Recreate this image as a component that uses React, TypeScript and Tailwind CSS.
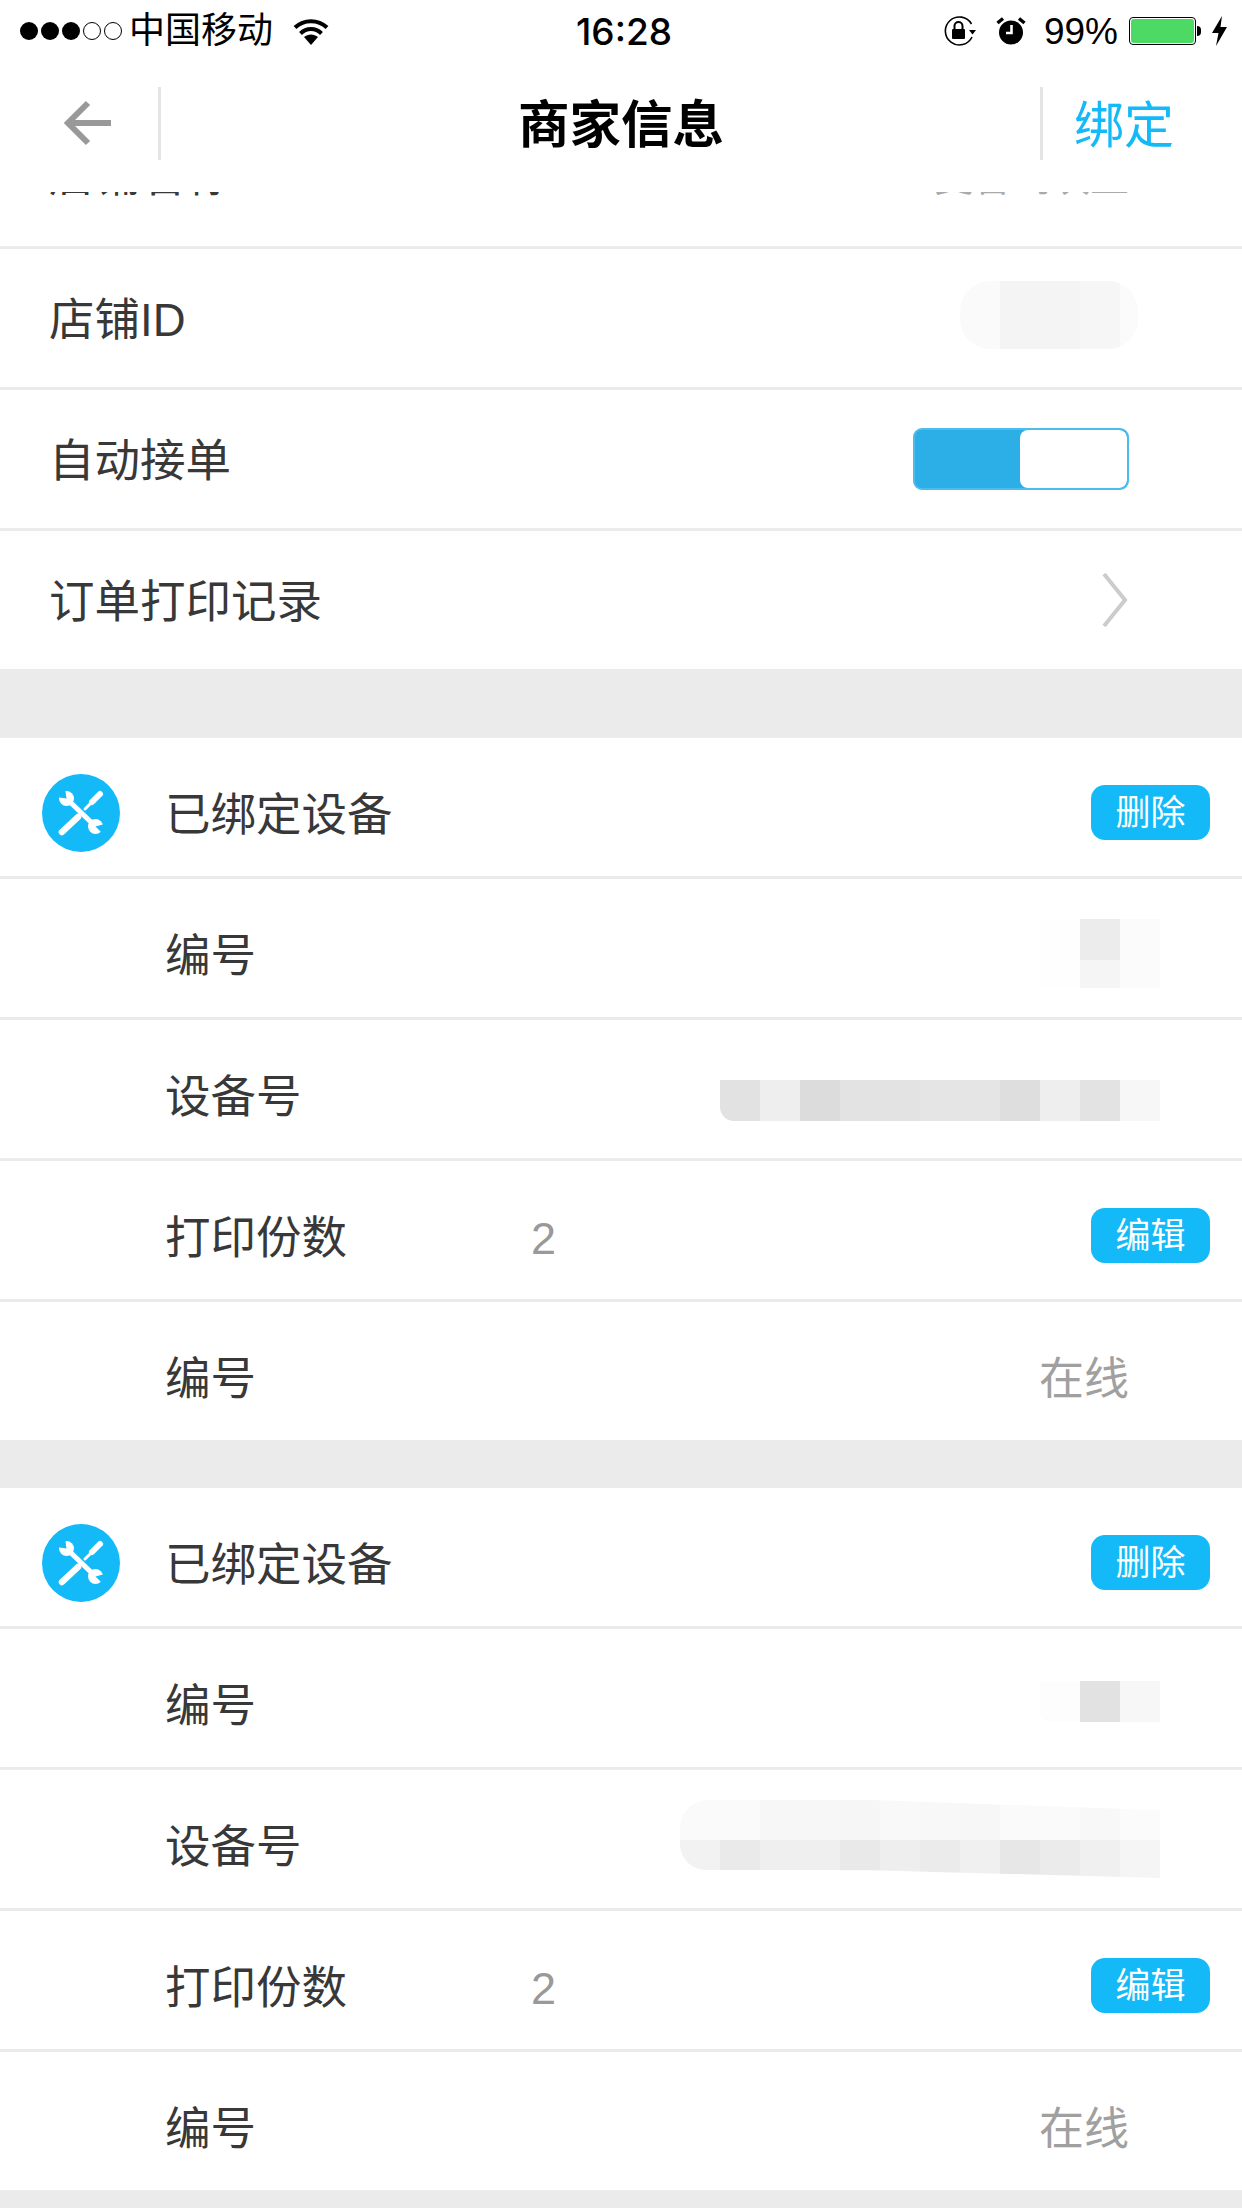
const FONT = "font-['Liberation_Sans','Noto_Sans_CJK_SC',sans-serif]"

// 打码区域的色块，一行一组
const CODE_A = ['bg-[#fefefe]', 'bg-[#ececec]', 'bg-[#fbfbfb]']
const CODE_A2 = ['bg-[#fefefe]', 'bg-[#f5f5f5]', 'bg-[#fbfbfb]']
const DEVICE_A = [
  'bg-[#e2e2e2]',
  'bg-[#eeeeee]',
  'bg-[#dcdcdc]',
  'bg-[#e3e3e3]',
  'bg-[#e3e3e3]',
  'bg-[#e5e5e5]',
  'bg-[#e5e5e5]',
  'bg-[#dedede]',
  'bg-[#eeeeee]',
  'bg-[#e3e3e3]',
  'bg-[#f7f7f7]',
]
const CODE_B = ['bg-[#fdfdfd]', 'bg-[#e2e2e2]', 'bg-[#f7f7f7]']
const DEVICE_B_TOP = [
  'bg-[#fafafa] rounded-tl-[28px]',
  'bg-[#fafafa]',
  'bg-[#f7f7f7]',
  'bg-[#f7f7f7]',
  'bg-[#f6f6f6]',
  'bg-[#f9f9f9]',
  'bg-[#f8f8f8]',
  'bg-[#f7f7f7]',
  'bg-[#fafafa]',
  'bg-[#fafafa]',
  'bg-[#f8f8f8]',
  'bg-[#fbfbfb]',
]
const DEVICE_B_BOTTOM = [
  'bg-[#f2f2f2] mb-[8px] rounded-bl-[26px]',
  'bg-[#eaeaea] mb-[8px]',
  'bg-[#efefef] mb-[8px]',
  'bg-[#efefef] mb-[8px]',
  'bg-[#e9e9e9]',
  'bg-[#eeeeee]',
  'bg-[#ebebeb]',
  'bg-[#f0f0f0]',
  'bg-[#e7e7e7]',
  'bg-[#ebebeb]',
  'bg-[#f0f0f0]',
  'bg-[#f5f5f5]',
]

function Cells({ colors, height }: { colors: string[]; height: string }) {
  return (
    <div className={`flex ${height}`}>
      {colors.map((c, i) => (
        <div key={i} className={`w-[40px] ${c}`} />
      ))}
    </div>
  )
}

function Row({
  label,
  indent = false,
  last = false,
  labelOffset = 'pt-[5px]',
  children,
}: {
  label: string
  indent?: boolean
  last?: boolean
  labelOffset?: string
  children?: React.ReactNode
}) {
  return (
    <div
      className={`flex items-center justify-between ${indent ? 'pl-[165px]' : 'pl-[49px]'} ${
        last ? 'h-[138px]' : 'h-[141px] border-b-[3px] border-[#ebebeb]'
      }`}
    >
      <span className={`text-[45.5px] leading-none text-[#383838] ${indent ? 'pt-[17px]' : labelOffset}`}>
        {label}
      </span>
      {children}
    </div>
  )
}

function BlueButton({ text }: { text: string }) {
  return (
    <div className="mr-[32px] mt-[10px] flex h-[55px] w-[119px] items-center justify-center rounded-[14px] bg-[#14baf8] text-[35px] leading-none text-white">
      {text}
    </div>
  )
}

function ToolIcon() {
  return (
    <svg viewBox="0 0 78 78" className="h-[78px] w-[78px]">
      <circle cx="39" cy="39" r="39" fill="#14baf8" />
      <g fill="none" stroke="#fff" strokeLinecap="round">
        <path d="M20 58 L36 43" strokeWidth="6.5" />
        <path d="M43 35 L51 27" strokeWidth="3" />
        <path d="M50 28 L58 20" strokeWidth="6" />
        <path d="M25 25 L53 52" strokeWidth="5" />
      </g>
      <circle cx="24.5" cy="24.5" r="7.5" fill="#fff" />
      <path d="M24.5 24.5 L14 23 L23 14 Z" fill="#14baf8" />
      <circle cx="53.5" cy="52.5" r="7.5" fill="#fff" />
      <path d="M53.5 52.5 L66 49 L63 62 Z" fill="#14baf8" />
    </svg>
  )
}

function DeviceGroup({ code, device, last }: { code: React.ReactNode; device: React.ReactNode; last?: boolean }) {
  return (
    <div>
      <div className="relative">
        <div className="absolute left-[42px] top-[36px]">
          <ToolIcon />
        </div>
        <Row label="已绑定设备" indent>
          <BlueButton text="删除" />
        </Row>
      </div>
      <Row label="编号" indent>
        {code}
      </Row>
      <Row label="设备号" indent>
        {device}
      </Row>
      <Row label="打印份数" indent>
        <span className="ml-[-96px] flex-1 pl-[280px] pt-[17px] text-[45px] leading-none text-[#999999]">2</span>
        <BlueButton text="编辑" />
      </Row>
      <Row label="编号" indent last>
        <span className="mr-[113px] pt-[17px] text-[45px] leading-none text-[#a0a0a0]">在线</span>
      </Row>
      {!last && <div className="h-[48px] bg-[#ebebeb]" />}
    </div>
  )
}

function StatusBar() {
  return (
    <div className="flex h-[62px] items-center text-black">
      <div className="flex flex-1 items-center pl-[20px]">
        <div className="flex gap-[3px]">
          <span className="h-[18px] w-[18px] rounded-full bg-black" />
          <span className="h-[18px] w-[18px] rounded-full bg-black" />
          <span className="h-[18px] w-[18px] rounded-full bg-black" />
          <span className="h-[18px] w-[18px] rounded-full border border-black" />
          <span className="h-[18px] w-[18px] rounded-full border border-black" />
        </div>
        <span className="ml-[7px] text-[36px] leading-none">中国移动</span>
        <svg viewBox="0 0 36 27" className="ml-[20px] h-[27px] w-[36px]">
          <path d="M18 27 L11 19 C15 15.5 21 15.5 25 19 Z" />
          <path d="M2 9.5 C11 1 25 1 34 9.5" fill="none" stroke="#000" strokeWidth="4" />
          <path d="M7.5 15.5 C13.5 9.5 22.5 9.5 28.5 15.5" fill="none" stroke="#000" strokeWidth="4" />
        </svg>
      </div>
      <span className="font-['Inter',sans-serif] text-[37px] font-medium leading-none">16:28</span>
      <div className="flex flex-1 items-center justify-end pr-[14px]">
        <svg viewBox="0 0 33 30" className="h-[30px] w-[33px]">
          <path d="M29 21 A14 14 0 1 1 28.5 8" fill="none" stroke="#000" strokeWidth="1.6" />
          <path d="M33 14 L26 14 L29.5 18.5 Z" />
          <rect x="9" y="13" width="13" height="10" rx="1" />
          <path d="M11.5 13 V10 A4 4 0 0 1 19.5 10 V13" fill="none" stroke="#000" strokeWidth="2" />
        </svg>
        <svg viewBox="0 0 30 28" className="ml-[20px] h-[28px] w-[30px]">
          <circle cx="15" cy="15.5" r="12" />
          <path d="M1.5 6 L7 1.5 M28.5 6 L23 1.5" stroke="#000" strokeWidth="3.5" />
          <path d="M15.5 8 V16 H10" fill="none" stroke="#fff" strokeWidth="2.6" />
        </svg>
        <span className="ml-[18px] text-[37px] font-light leading-none">99%</span>
        <div className="ml-[11px] h-[28px] w-[67px] rounded-[4px] border border-black p-[1px]">
          <div className="h-full w-full rounded-[3px] bg-[#4cd964]" />
        </div>
        <div className="ml-[1px] h-[10px] w-[4px] rounded-r-full bg-black" />
        <svg viewBox="0 0 17 30" className="ml-[10px] h-[30px] w-[17px]">
          <path d="M11 0 L1 17 H7.5 L5 30 L16 11 H9.5 Z" />
        </svg>
      </div>
    </div>
  )
}

function NavBar() {
  return (
    <div className="flex h-[122px] items-center">
      <div className="flex h-full w-[158px] items-center pl-[63px]">
        <svg viewBox="0 0 48 46" className="h-[46px] w-[48px]">
          <path d="M48 23 H5 M25 3 L5 23 L25 43" fill="none" stroke="#999999" strokeWidth="6" />
        </svg>
      </div>
      <div className="h-[73px] w-[3px] bg-[#e5e5e5]" />
      <div className="flex-1 pl-[41px] pt-[5px] text-center text-[51.5px] font-bold leading-none text-black">
        商家信息
      </div>
      <div className="h-[73px] w-[3px] bg-[#e5e5e5]" />
      <div className="w-[199px] pl-[31px] pt-[5px] text-[50px] leading-none text-[#14baf8]">绑定</div>
    </div>
  )
}

export default function App() {
  return (
    <div className={`flex h-[2208px] flex-col overflow-hidden bg-white ${FONT}`}>
      <div className="h-[192px] shrink-0">
        <StatusBar />
        <NavBar />
      </div>
      <div className="flex-1 overflow-hidden bg-[#ebebeb]">
        <div className="mt-[-84px] bg-white">
          <Row label="店铺名称" labelOffset="pt-0">
            <span className="mr-[113px] text-[39px] leading-none text-[#aaaaaa]">麦香鸡块王</span>
          </Row>
          <Row label="店铺ID">
            <div className="mb-[6px] mr-[104px] flex h-[68px] w-[178px] overflow-hidden rounded-[30px]">
              <div className="w-[40px] bg-[#fafafa]" />
              <div className="w-[80px] bg-[#f4f4f4]" />
              <div className="w-[40px] bg-[#f6f6f6]" />
              <div className="w-[18px] bg-[#fbfbfb]" />
            </div>
          </Row>
          <Row label="自动接单">
            <div className="mr-[113px] flex h-[62px] w-[216px] overflow-hidden rounded-[9px] border-2 border-[#4cbcec] bg-[#2caee6]">
              <div className="w-[105px]" />
              <div className="flex-1 rounded-[8px] bg-white" />
            </div>
          </Row>
          <Row label="订单打印记录" last>
            <svg viewBox="0 0 26 56" className="mr-[114px] h-[56px] w-[26px]">
              <path d="M2 2 L23 28 L2 54" fill="none" stroke="#cccccc" strokeWidth="4" />
            </svg>
          </Row>
          <div className="h-[69px] bg-[#ebebeb]" />
          <DeviceGroup
            code={
              <div className="mr-[82px] mt-[10px]">
                <Cells colors={CODE_A} height="h-[41px]" />
                <Cells colors={CODE_A2} height="h-[28px]" />
              </div>
            }
            device={
              <div className="mr-[82px] mt-[22px] overflow-hidden rounded-bl-[14px]">
                <Cells colors={DEVICE_A} height="h-[41px]" />
              </div>
            }
          />
          <DeviceGroup
            code={
              <div className="mr-[82px] mt-[6px] overflow-hidden rounded-bl-[10px]">
                <Cells colors={CODE_B} height="h-[41px]" />
              </div>
            }
            device={
              <div className="mr-[82px] [clip-path:polygon(0_0,40%_0,100%_13%,100%_100%,40%_90%,0_90%)]">
                <Cells colors={DEVICE_B_TOP} height="h-[40px]" />
                <Cells colors={DEVICE_B_BOTTOM} height="h-[38px]" />
              </div>
            }
            last
          />
        </div>
      </div>
    </div>
  )
}
